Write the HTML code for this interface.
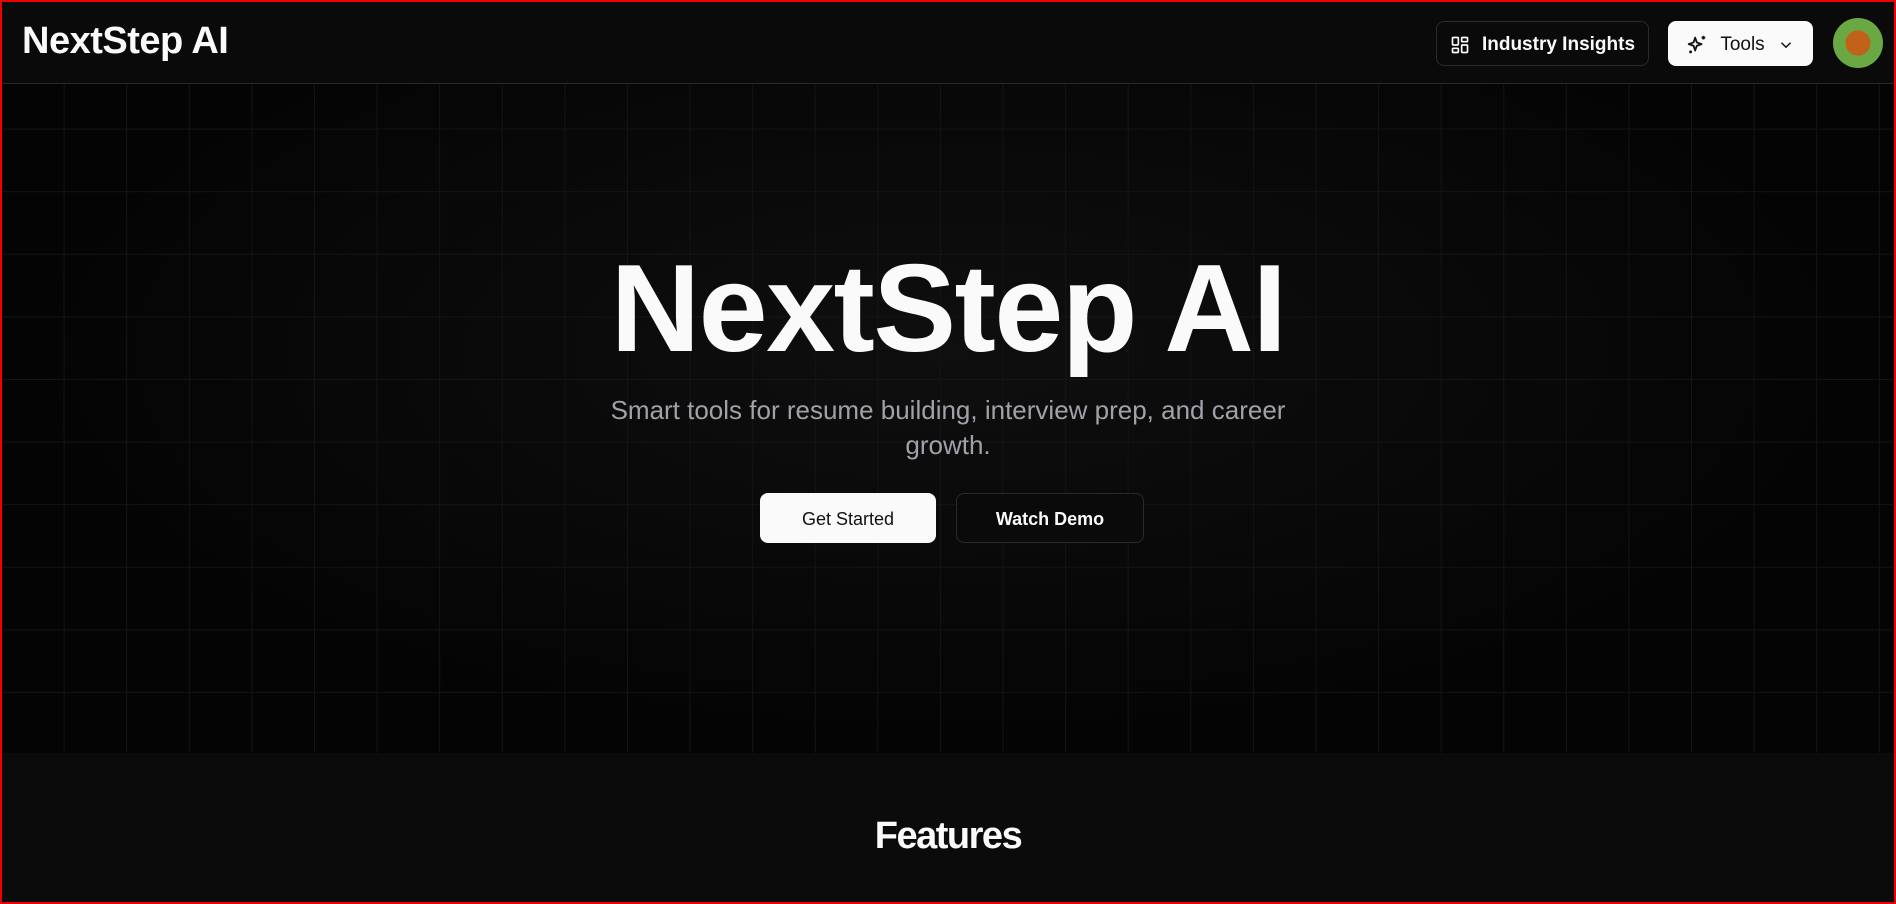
<!DOCTYPE html>
<html><head><style>
*{box-sizing:border-box;margin:0;padding:0}
html,body{width:1896px;height:904px;overflow:hidden;background:#0a0a0a;font-family:"Liberation Sans",sans-serif;color:#fafafa}
.frame{position:absolute;inset:0;border:2px solid #e00;z-index:10;pointer-events:none}
header{position:absolute;left:0;top:0;width:1896px;height:84px;background:#0a0a0a;border-bottom:1px solid #2a2a2a;z-index:2}
.logo{position:absolute;left:22px;top:20px;font-size:38px;font-weight:700;letter-spacing:-0.5px}
.btn{position:absolute;display:flex;align-items:center;justify-content:center;gap:12px;border-radius:8px;font-size:19px;font-weight:700;padding-top:2px}
.ii{left:1436px;top:21px;width:213px;height:45px;border:1px solid #2a2a2a;background:#0a0a0a;color:#fafafa}
.tools{left:1668px;top:21px;width:145px;height:45px;background:#fafafa;color:#111;font-weight:400}
.av{position:absolute;left:1833px;top:18px;width:50px;height:50px;border-radius:50%;background:radial-gradient(circle at 50% 50%,#c2621a 0 35%,#6aa843 36%);overflow:hidden}
.hero{position:absolute;left:0;top:84px;width:1896px;height:669px;
background-image:linear-gradient(#141414 1px,transparent 1px),linear-gradient(90deg,#141414 1px,transparent 1px),radial-gradient(ellipse at 50% 40%,#0f0f0f,#040404 70%);
background-size:62.6px 62.6px,62.6px 62.6px,100% 100%;background-position:0 -18px,1px 0,0 0}
h1{position:absolute;left:0;width:1896px;top:150px;text-align:center;font-size:124px;font-weight:700;letter-spacing:-1.5px;line-height:150px}
.sub{position:absolute;left:588px;width:720px;top:309px;text-align:center;font-size:26px;line-height:35px;color:#a1a1aa}
.b1{left:760px;width:176px;height:50px;background:#fafafa;color:#111;font-weight:400;font-size:18px}
.b2{left:956px;width:188px;height:50px;border:1px solid #2a2a2a;background:#0a0a0a;color:#fafafa;font-size:18px}
.feat{position:absolute;left:0;top:753px;width:1896px;height:151px;background:#0b0b0b}
.feat h2{position:absolute;left:0;width:1896px;top:62px;text-align:center;font-size:38px;font-weight:700;letter-spacing:-1.5px}
</style></head><body>
<div class="frame"></div>
<header>
<div class="logo">NextStep AI</div>
<div class="btn ii"><svg width="20" height="20" viewBox="0 0 24 24" fill="none" stroke="#fafafa" stroke-width="2"><rect x="3" y="3" width="7" height="9" rx="1"/><rect x="14" y="3" width="7" height="5" rx="1"/><rect x="14" y="12" width="7" height="9" rx="1"/><rect x="3" y="16" width="7" height="5" rx="1"/></svg>Industry Insights</div>
<div class="btn tools"><svg width="22" height="22" viewBox="0 0 24 24" fill="none" stroke="#111" stroke-width="2" stroke-linejoin="round"><path d="M10 4l1.8 5.2L17 11l-5.2 1.8L10 18l-1.8-5.2L3 11l5.2-1.8z"/><path d="M19 2v4M17 4h4M5 18v3M3.5 19.5h3"/></svg>Tools<svg width="18" height="18" viewBox="0 0 24 24" fill="none" stroke="#111" stroke-width="2"><path d="M6 9l6 6 6-6"/></svg></div>
<div class="av"></div>
</header>
<div class="hero">
<h1>NextStep AI</h1>
<div class="sub">Smart tools for resume building, interview prep, and career growth.</div>
<div class="btn b1" style="top:409px">Get Started</div>
<div class="btn b2" style="top:409px">Watch Demo</div>
</div>
<div class="feat"><h2>Features</h2></div>
</body></html>
